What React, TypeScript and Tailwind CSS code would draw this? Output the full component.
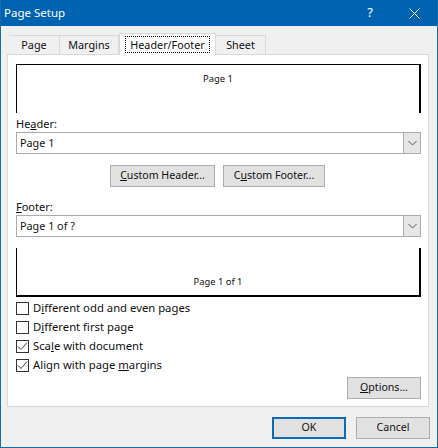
const font = "font-['Noto_Sans','Open_Sans',sans-serif]";

function U({ children }: { children: string }) {
  return <span className="underline underline-offset-1 decoration-1">{children}</span>;
}

function Btn({ children, w, strong }: { children: React.ReactNode; w: string; strong?: boolean }) {
  return (
    <div
      className={`${w} h-[22px] flex items-center justify-center text-[10.6px] text-[#111] bg-[#e1e1e1] border ${
        strong ? "border-2 border-[#0a6cb8]" : "border-[#adadad]"
      }`}
    >
      <span>{children}</span>
    </div>
  );
}

function Combo({ value }: { value: string }) {
  return (
    <div className="h-[22px] flex border border-[#ababab] bg-white">
      <div className="flex-1 pl-[3px] text-[10.8px] leading-[20px] text-[#111]">{value}</div>
      <div className="w-[17px] border-l border-[#ababab] bg-[#e6e6e6] flex items-center justify-center">
        <svg width="9" height="6" viewBox="0 0 9 6" fill="none" stroke="#555" strokeWidth="1">
          <path d="M0.5 1 L4.5 5 L8.5 1" />
        </svg>
      </div>
    </div>
  );
}

function Check({ label, checked }: { label: React.ReactNode; checked?: boolean }) {
  return (
    <div className="h-[13px] flex items-center gap-[4px] text-[11.3px] text-[#111]">
      <div className="w-[13px] h-[13px] border border-[#333] bg-white flex items-center justify-center shrink-0">
        {checked && (
          <svg width="11" height="11" viewBox="0 0 11 11" fill="none" stroke="#444" strokeWidth="1">
            <path d="M1 5.5 L4 8.5 L10 1.5" />
          </svg>
        )}
      </div>
      <span>{label}</span>
    </div>
  );
}

function Tab({ children, w, active }: { children: React.ReactNode; w: string; active?: boolean }) {
  return (
    <div
      className={`${w} flex items-center justify-center text-[10.8px] text-[#111] border-[#d9d9d9] border-t border-r ${
        active ? "h-[22px] -mt-[2px] -mb-px bg-white border-l relative z-10" : "h-[19px] bg-[#f0f0f0]"
      }`}
    >
      {active ? <span className="border border-dotted border-black px-[4px] leading-[15px]">{children}</span> : children}
    </div>
  );
}

export default function App() {
  return (
    <div className={`${font} w-[438px] h-[448px] bg-[#f0f0f0] border-l border-r border-b border-[#1b6aa8] overflow-hidden flex flex-col`}>
      <div className="h-[26px] -mx-px bg-[#0063b1] text-white flex items-center shrink-0">
        <span className="ml-[4px] flex-1 text-[11.5px]">Page Setup</span>
        <span className="text-[13px] mr-[36px]">?</span>
        <svg width="11" height="11" viewBox="0 0 11 11" stroke="white" strokeWidth="1" className="mr-[18px]">
          <path d="M0.5 0.5 L10.5 10.5 M10.5 0.5 L0.5 10.5" />
        </svg>
      </div>

      <div className="mt-[9px] ml-[8px] w-[420px] flex items-end h-[19px] relative shrink-0">
        <Tab w="w-[51px]">Page</Tab>
        <Tab w="w-[59px]">Margins</Tab>
        <Tab w="w-[97px]" active>Header/Footer</Tab>
        <Tab w="w-[50px]">Sheet</Tab>
      </div>

      <div className="ml-[6px] w-[422px] h-[353px] bg-white border border-[#d9d9d9] px-[8px] pt-[9px] flex flex-col shrink-0">
        <div className="w-[405px] h-[49px] border-t border-l border-r-2 border-black text-center text-[9.4px] pt-[7px] text-[#111]">
          Page 1
        </div>
        <div className="mt-[4px] text-[11px] leading-[14px] text-[#111]">
          He<U>a</U>der:
        </div>
        <div className="mt-[1px] w-[405px]"><Combo value="Page 1" /></div>
        <div className="mt-[11px] flex gap-[8px] ml-[94px]">
          <Btn w="w-[105px]"><U>C</U>ustom Header...</Btn>
          <Btn w="w-[102px]">C<U>u</U>stom Footer...</Btn>
        </div>
        <div className="mt-[13px] text-[11px] leading-[14px] text-[#111]">
          <U>F</U>ooter:
        </div>
        <div className="mt-[1px] w-[405px]"><Combo value="Page 1 of ?" /></div>
        <div className="mt-[11px] w-[405px] h-[49px] border-b-2 border-l border-r-2 border-black text-center text-[9.4px] pt-[27px] text-[#111]">
          Page 1 of 1
        </div>
        <div className="mt-[5px] flex flex-col gap-[6px]">
          <Check label={<>D<U>i</U>fferent odd and even pages</>} />
          <Check label={<>D<U>i</U>fferent first page</>} />
          <Check checked label={<>Sca<U>l</U>e with document</>} />
          <Check checked label={<>Align with page <U>m</U>argins</>} />
        </div>
        <div className="mt-[5px] flex justify-end w-[405px]">
          <Btn w="w-[74px]"><U>O</U>ptions...</Btn>
        </div>
      </div>

      <div className="mt-[10px] ml-[271px] flex gap-[10px] shrink-0">
        <Btn w="w-[74px]" strong>OK</Btn>
        <Btn w="w-[74px]">Cancel</Btn>
      </div>
    </div>
  );
}
